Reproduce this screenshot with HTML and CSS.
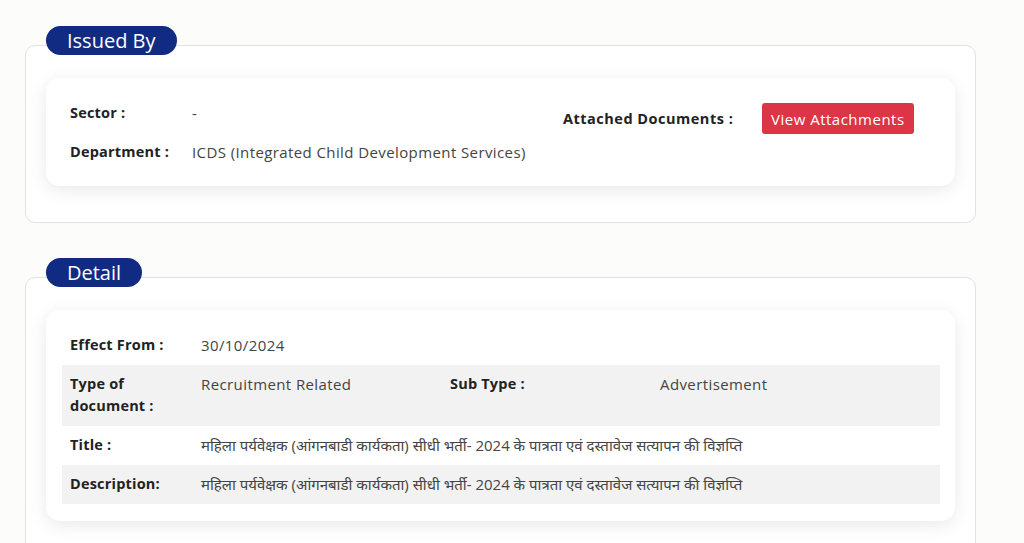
FILE: index.html
```html
<!DOCTYPE html>
<html lang="hi">
<head>
  <meta charset="UTF-8" />
  <meta name="viewport" content="width=device-width, initial-scale=1.0"/>
  <title>Notice - Detail</title>
  <link rel="stylesheet" href="styles.css">
</head>
<body>
  <section class="block">
    <div class="pill">Issued By</div>
    <div class="outer-card">
      <div class="inner-card issued">
        <div class="issued-left">
          <div class="kv">
            <span class="label">Sector :</span>
            <span class="value">-</span>
          </div>
          <div class="kv">
            <span class="label">Department :</span>
            <span class="value">ICDS (Integrated Child Development Services)</span>
          </div>
        </div>
        <div class="issued-right">
          <span class="label attach-label">Attached Documents :</span>
          <button class="attach-btn">View Attachments</button>
        </div>
      </div>
    </div>
  </section>

  <section class="block">
    <div class="pill">Detail</div>
    <div class="outer-card">
      <div class="inner-card">
        <div class="detail-table">
          <div class="row">
            <span class="label">Effect From :</span>
            <span class="value wide">30/10/2024</span>
          </div>
          <div class="row shaded">
            <span class="label">Type of<br>document :</span>
            <span class="value">Recruitment Related</span>
            <span class="label">Sub Type :</span>
            <span class="value">Advertisement</span>
          </div>
          <div class="row">
            <span class="label">Title :</span>
            <span class="value wide hindi">महिला पर्यवेक्षक (आंगनबाडी कार्यकता) सीधी भर्ती- 2024 के पात्रता एवं दस्तावेज सत्यापन की विज्ञप्ति</span>
          </div>
          <div class="row shaded">
            <span class="label">Description:</span>
            <span class="value wide hindi">महिला पर्यवेक्षक (आंगनबाडी कार्यकता) सीधी भर्ती- 2024 के पात्रता एवं दस्तावेज सत्यापन की विज्ञप्ति</span>
          </div>
        </div>
      </div>
    </div>
  </section>
</body>
</html>
```

FILE: styles.css
```css
:root {
  --navy: #112b83;
  --red: #dc3545;
  --label: #222;
  --value: #444;
  --row-bg: #f2f2f2;
  --border: #e2e2e2;
  --page-bg: #fcfcfa;
}

body {
  font-family: 'Open Sans', 'Noto Sans', sans-serif;
  background-color: var(--page-bg);
  margin: 0;
  padding: 26px 48px 0 25px;
  color: var(--value);
}

.block {
  margin-bottom: 35px;
}

.pill {
  position: relative;
  z-index: 1;
  width: fit-content;
  margin: 0 0 -10px 21px;
  height: 29px;
  line-height: 29px;
  padding: 0 21px;
  border-radius: 15px;
  background-color: var(--navy);
  color: #fff;
  font-size: 20px;
}

.outer-card {
  background: #fff;
  border: 1px solid var(--border);
  border-radius: 10px;
  padding: 32px 20px 36px;
}

.inner-card {
  background: #fff;
  border-radius: 14px;
  box-shadow: 0 4px 18px rgba(0, 0, 0, 0.09);
  padding: 16px 15px 17px 16px;
}

.label {
  color: var(--label);
  font-weight: 700;
  font-size: 14.5px;
  letter-spacing: 0.2px;
}

.value {
  color: var(--value);
  font-size: 15px;
  letter-spacing: 0.4px;
}

/* issued by */

.inner-card.issued {
  display: flex;
  padding: 15px 24px;
}

.issued-left {
  width: 493px;
}

.kv {
  display: flex;
  align-items: center;
  height: 39px;
}

.kv .label {
  width: 122px;
}

.issued-right {
  display: flex;
  align-items: center;
  height: 31px;
  margin-top: 10px;
}

.attach-label {
  width: 199px;
  letter-spacing: 0.5px;
}

.attach-btn {
  background-color: var(--red);
  color: #fff;
  border: none;
  border-radius: 3px;
  height: 31px;
  padding: 0 9px;
  font-family: inherit;
  font-size: 15px;
  letter-spacing: 0.5px;
  cursor: pointer;
}

/* detail */

.row {
  display: grid;
  grid-template-columns: 131px 249px 210px 1fr;
  align-items: start;
  padding: 8px 8px 9px;
  line-height: 22px;
}

.row.shaded {
  background-color: var(--row-bg);
}

.row .wide {
  grid-column: span 3;
}

.value.hindi {
  font-size: 15px;
  letter-spacing: 0;
}
```
